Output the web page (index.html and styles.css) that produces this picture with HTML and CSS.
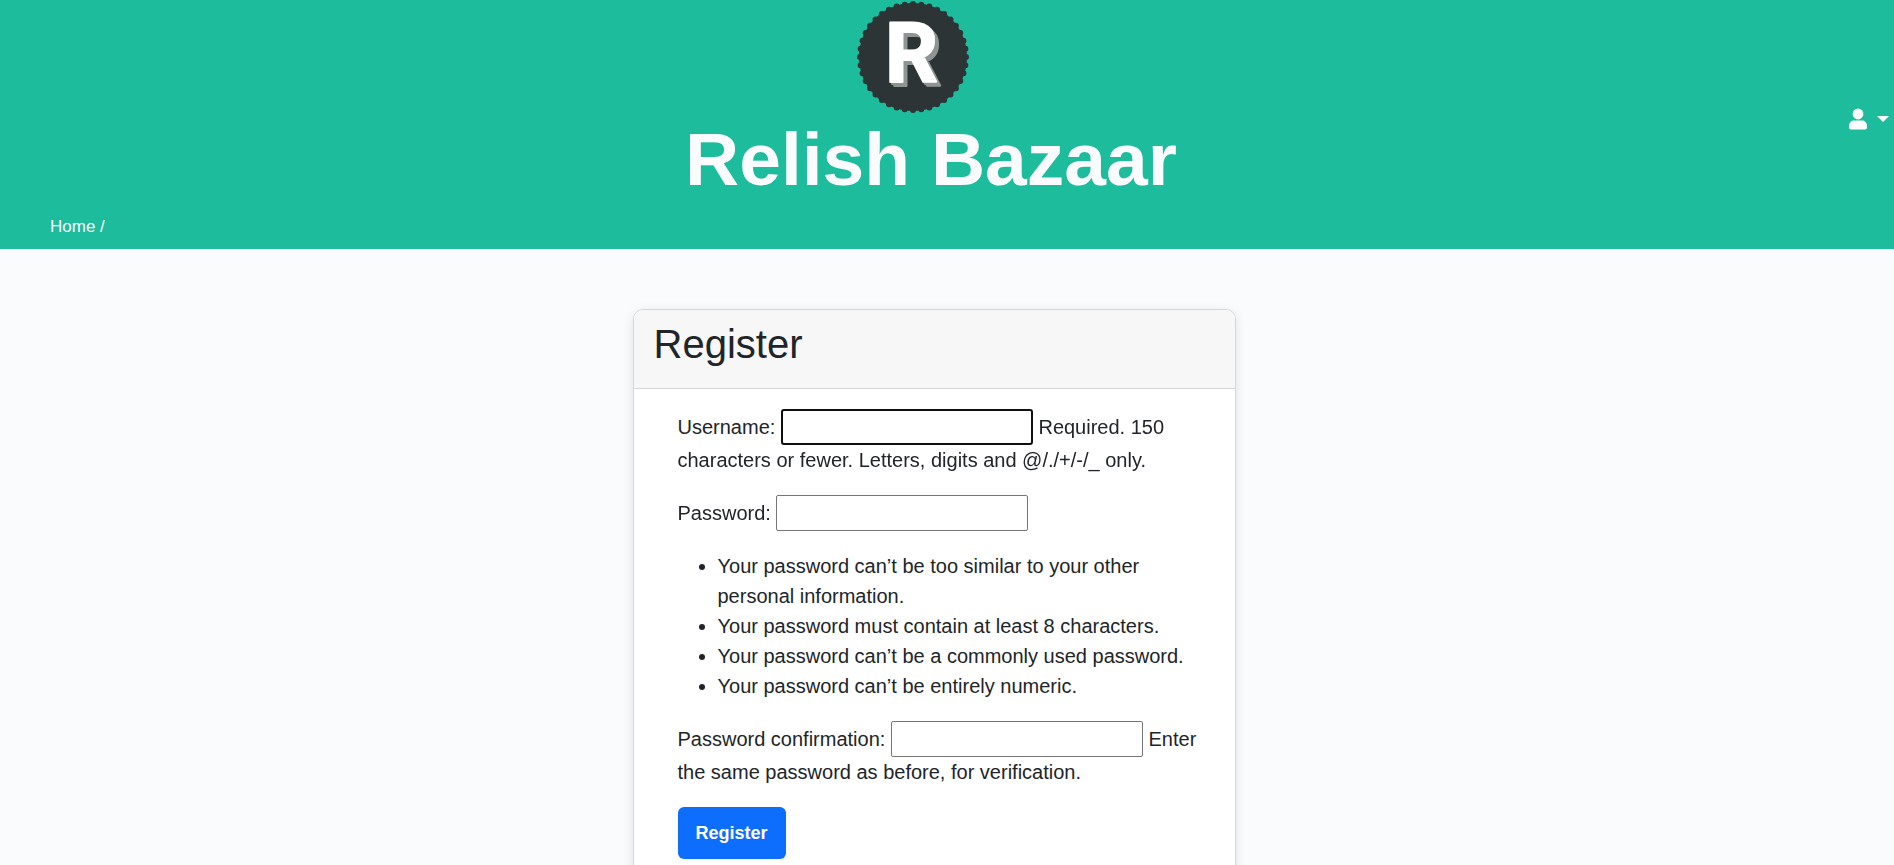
FILE: index.html
```html
<!DOCTYPE html>
<html lang="en">
<head>
  <meta charset="utf-8">
  <meta name="viewport" content="width=device-width, initial-scale=1">
  <title>Relish Bazaar</title>
  <link rel="stylesheet" href="styles.css">
</head>
<body>
  <header class="site-header">
    <div class="masthead">
      <div class="brand">
        <svg class="brand-logo" viewBox="0 0 114 114" aria-hidden="true">
          <circle cx="57" cy="57" r="54" fill="#2d3436"/>
          <circle class="scallops" cx="57" cy="57" r="53" pathLength="400"/>
          <text class="logo-letter" x="29" y="82">R</text>
        </svg>
        <h1 class="brand-name">Relish Bazaar</h1>
      </div>
      <button class="user-menu" type="button" aria-label="Account menu">
        <svg class="user-icon" viewBox="0 0 20 22" aria-hidden="true">
          <circle cx="10" cy="6" r="5.4"/>
          <path d="M1 18.500C1 14.500 3.500 12.600 6.200 12.600H13.800C16.500 12.600 19 14.500 19 18.500V19.500Q19 21.500 17 21.500H3Q1 21.500 1 19.500Z"/>
        </svg>
        <span class="caret"></span>
      </button>
    </div>
    <nav class="breadcrumbs" aria-label="Breadcrumb"><a href="#">Home</a> /</nav>
  </header>

  <main class="page">
    <section class="card">
      <div class="card-header"><h2 class="card-title">Register</h2></div>
      <form class="card-body">
        <p class="field"><label for="username">Username:</label> <input class="text-input" id="username" type="text" autofocus> Required. 150 characters or fewer. Letters, digits and @/./+/-/_ only.</p>
        <p class="field"><label for="password">Password:</label> <input class="text-input" id="password" type="password"></p>
        <ul class="rules">
          <li>Your password can’t be too similar to your other personal information.</li>
          <li>Your password must contain at least 8 characters.</li>
          <li>Your password can’t be a commonly used password.</li>
          <li>Your password can’t be entirely numeric.</li>
        </ul>
        <p class="field"><label for="confirm">Password confirmation:</label> <input class="text-input" id="confirm" type="password"> Enter the same password as before, for verification.</p>
        <button class="submit" type="submit">Register</button>
      </form>
    </section>
  </main>
</body>
</html>
```

FILE: styles.css
```css
* {
  box-sizing: border-box;
}

html {
  scrollbar-width: none;
}

body {
  margin: 0;
  background: #f9fbfd;
  color: #212529;
  font-family: "Liberation Sans", Arial, sans-serif;
  font-size: 20px;
  line-height: 30px;
}

.site-header {
  padding-bottom: 10px;
  background: #1cbc9c;
  color: #f9fbfd;
}

.masthead {
  display: flex;
  align-items: center;
}

.brand {
  flex: 1;
  display: flex;
  flex-direction: column;
  align-items: center;
  padding-left: 14px;
}

.brand-logo {
  width: 114px;
  height: 114px;
  margin-right: 36px;
  overflow: visible;
}

.scallops {
  fill: none;
  stroke: #2d3436;
  stroke-width: 6;
  stroke-linecap: round;
  stroke-dasharray: 0 10;
}

.logo-letter {
  fill: #fff;
  stroke: #fff;
  stroke-width: 2;
  stroke-linejoin: round;
  font-family: Roboto, sans-serif;
  font-size: 83px;
  font-weight: 700;
  filter: drop-shadow(2px 2px 0 #8f9495) drop-shadow(2px 2px 0 #8f9495);
}

.brand-name {
  margin: 0;
  font-size: 75px;
  line-height: 90px;
}

.user-menu {
  display: flex;
  align-items: center;
  gap: 9px;
  margin: 0;
  padding: 34px 5px 0 0;
  border: 0;
  background: none;
  color: #fff;
}

.user-icon {
  width: 20px;
  height: 22px;
  fill: currentColor;
}

.caret {
  border-top: 6px solid currentColor;
  border-right: 6px solid transparent;
  border-left: 6px solid transparent;
}

.breadcrumbs {
  padding: 11px 50px 0;
  font-size: 17px;
  line-height: 24px;
}

.breadcrumbs a {
  color: inherit;
  text-decoration: none;
}

.page {
  display: flex;
  justify-content: center;
  padding: 60px 20px 0;
}

.card {
  width: 100%;
  max-width: 603px;
  margin-right: 26px;
  border: 1px solid #d5d8da;
  border-radius: 10px;
  background: #fff;
  box-shadow: 0 3px 12px rgba(0, 0, 0, 0.1);
}

.card-header {
  padding: 10px 20px 20px;
  border-bottom: 1px solid #d5d8da;
  border-radius: 9px 9px 0 0;
  background: #f7f7f7;
}

.card-title {
  margin: 0;
  font-size: 40px;
  font-weight: 400;
  line-height: 48px;
}

.card-body {
  padding: 20px 36px 20px 44px;
}

.field {
  margin: 0 0 20px;
}

.text-input {
  width: 252px;
  height: 36px;
  margin: 0;
  padding: 2px;
  border: 1px solid #767676;
  border-radius: 2px;
  background: #fff;
  font: inherit;
}

.text-input:focus {
  border: 2px solid #101010;
  border-radius: 3px;
  outline: none;
}

.rules {
  margin: 0 0 20px;
  padding-left: 40px;
}

.submit {
  padding: 11px 18px;
  border: 0;
  border-radius: 6px;
  background: #0d6efd;
  color: #fff;
  font: bold 18px/30px "Liberation Sans", Arial, sans-serif;
}
```
